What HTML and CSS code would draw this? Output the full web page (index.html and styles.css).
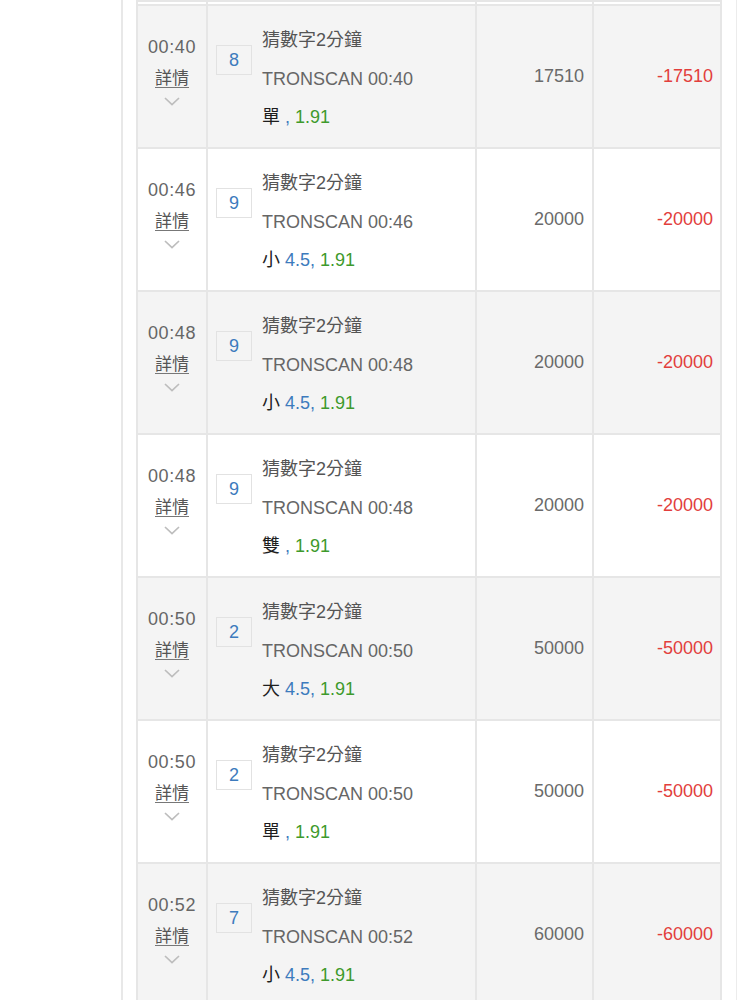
FILE: index.html
```html
<!DOCTYPE html>
<html lang="zh-Hant">
<head>
<meta charset="utf-8">
<title>投注記錄</title>
<link rel="stylesheet" href="styles.css">
</head>
<body>
<div class="page">
  <div class="panel">
    <table class="records">
      <colgroup>
        <col class="c-time"><col class="c-info"><col class="c-amt"><col class="c-res">
      </colgroup>
      <tbody>
        <tr class="tail"><td></td><td></td><td></td><td></td></tr>

        <tr class="alt">
          <td class="time"><div class="tbox"><span class="t">00:40</span><a class="detail">詳情</a><svg class="chev" viewBox="0 0 16 9"><polyline points="1,1 8,7.5 15,1"/></svg></div></td>
          <td class="info"><div class="ibox"><span class="badge">8</span><div class="lines"><div class="game">猜數字2分鐘</div><div class="src">TRONSCAN 00:40</div><div class="bet"><span class="k">單</span><span class="b"> ,</span><span class="g"> 1.91</span></div></div></div></td>
          <td class="amt">17510</td>
          <td class="res">-17510</td>
        </tr>

        <tr>
          <td class="time"><div class="tbox"><span class="t">00:46</span><a class="detail">詳情</a><svg class="chev" viewBox="0 0 16 9"><polyline points="1,1 8,7.5 15,1"/></svg></div></td>
          <td class="info"><div class="ibox"><span class="badge">9</span><div class="lines"><div class="game">猜數字2分鐘</div><div class="src">TRONSCAN 00:46</div><div class="bet"><span class="k">小</span><span class="b"> 4.5,</span><span class="g"> 1.91</span></div></div></div></td>
          <td class="amt">20000</td>
          <td class="res">-20000</td>
        </tr>

        <tr class="alt">
          <td class="time"><div class="tbox"><span class="t">00:48</span><a class="detail">詳情</a><svg class="chev" viewBox="0 0 16 9"><polyline points="1,1 8,7.5 15,1"/></svg></div></td>
          <td class="info"><div class="ibox"><span class="badge">9</span><div class="lines"><div class="game">猜數字2分鐘</div><div class="src">TRONSCAN 00:48</div><div class="bet"><span class="k">小</span><span class="b"> 4.5,</span><span class="g"> 1.91</span></div></div></div></td>
          <td class="amt">20000</td>
          <td class="res">-20000</td>
        </tr>

        <tr>
          <td class="time"><div class="tbox"><span class="t">00:48</span><a class="detail">詳情</a><svg class="chev" viewBox="0 0 16 9"><polyline points="1,1 8,7.5 15,1"/></svg></div></td>
          <td class="info"><div class="ibox"><span class="badge">9</span><div class="lines"><div class="game">猜數字2分鐘</div><div class="src">TRONSCAN 00:48</div><div class="bet"><span class="k">雙</span><span class="b"> ,</span><span class="g"> 1.91</span></div></div></div></td>
          <td class="amt">20000</td>
          <td class="res">-20000</td>
        </tr>

        <tr class="alt">
          <td class="time"><div class="tbox"><span class="t">00:50</span><a class="detail">詳情</a><svg class="chev" viewBox="0 0 16 9"><polyline points="1,1 8,7.5 15,1"/></svg></div></td>
          <td class="info"><div class="ibox"><span class="badge">2</span><div class="lines"><div class="game">猜數字2分鐘</div><div class="src">TRONSCAN 00:50</div><div class="bet"><span class="k">大</span><span class="b"> 4.5,</span><span class="g"> 1.91</span></div></div></div></td>
          <td class="amt">50000</td>
          <td class="res">-50000</td>
        </tr>

        <tr>
          <td class="time"><div class="tbox"><span class="t">00:50</span><a class="detail">詳情</a><svg class="chev" viewBox="0 0 16 9"><polyline points="1,1 8,7.5 15,1"/></svg></div></td>
          <td class="info"><div class="ibox"><span class="badge">2</span><div class="lines"><div class="game">猜數字2分鐘</div><div class="src">TRONSCAN 00:50</div><div class="bet"><span class="k">單</span><span class="b"> ,</span><span class="g"> 1.91</span></div></div></div></td>
          <td class="amt">50000</td>
          <td class="res">-50000</td>
        </tr>

        <tr class="alt">
          <td class="time"><div class="tbox"><span class="t">00:52</span><a class="detail">詳情</a><svg class="chev" viewBox="0 0 16 9"><polyline points="1,1 8,7.5 15,1"/></svg></div></td>
          <td class="info"><div class="ibox"><span class="badge">7</span><div class="lines"><div class="game">猜數字2分鐘</div><div class="src">TRONSCAN 00:52</div><div class="bet"><span class="k">小</span><span class="b"> 4.5,</span><span class="g"> 1.91</span></div></div></div></td>
          <td class="amt">60000</td>
          <td class="res">-60000</td>
        </tr>
      </tbody>
    </table>
  </div>
</div>
</body>
</html>
```

FILE: styles.css
```css
html, body {
  margin: 0;
  padding: 0;
  background: #ffffff;
}
body {
  font-family: "Liberation Sans", "Noto Sans CJK TC", sans-serif;
  font-size: 18px;
  color: #666;
  height: 1000px;
  overflow: hidden;
}
.page {
  display: flex;
  height: 1000px;
}
.panel {
  margin-left: 121px;
  width: 586px;
  padding: 0 14px 0 13px;
  border-left: 2px solid #e8e8e8;
  border-right: 1px solid #ececec;
  height: 1000px;
}
.records {
  border-collapse: collapse;
  table-layout: fixed;
  width: 586px;
}
.c-time { width: 70px; }
.c-info { width: 269px; }
.c-amt { width: 117px; }
.c-res { width: 128px; }
.records td {
  border: 2px solid #e6e6e6;
  padding: 0;
  background: #ffffff;
}
.records tr.alt td {
  background: #f4f4f4;
}
.records tr.tail td {
  height: 2px;
}
.records tr {
  height: 143px;
}
.records tr.tail { height: 2px; }

.time { vertical-align: top; }
.tbox {
  display: flex;
  flex-direction: column;
  align-items: center;
  padding-top: 25px;
}
.t {
  line-height: 32px;
  color: #666;
  letter-spacing: 0.6px;
}
.detail {
  line-height: 32px;
  color: #555;
  text-decoration: underline;
  text-underline-offset: 3px;
  text-decoration-color: #777;
  font-size: 17px;
}
.chev {
  width: 16px;
  height: 9px;
  margin-top: 2px;
}
.chev polyline {
  fill: none;
  stroke: #bdbdbd;
  stroke-width: 1.7;
}

.info { vertical-align: top; }
.ibox {
  display: flex;
  align-items: flex-start;
  padding: 15px 0 0 8px;
  gap: 10px;
}
.badge {
  box-sizing: border-box;
  width: 36px;
  height: 30px;
  margin-top: 24px;
  border: 1px solid #e2e2e2;
  display: flex;
  align-items: center;
  justify-content: center;
  color: #3d7bbd;
  font-size: 18px;
}
.lines > div {
  line-height: 38.5px;
  white-space: nowrap;
}
.game { color: #555; }
.src { color: #666; }
.bet .k { color: #1e1e1e; }
.bet .b { color: #3d7bbd; }
.bet .g { color: #3e9a2c; }

.amt {
  text-align: right;
  vertical-align: middle;
  padding-right: 8px !important;
  color: #6a6a6a;
}
.res {
  text-align: right;
  vertical-align: middle;
  padding-right: 7px !important;
  color: #e23e3c;
}
```
